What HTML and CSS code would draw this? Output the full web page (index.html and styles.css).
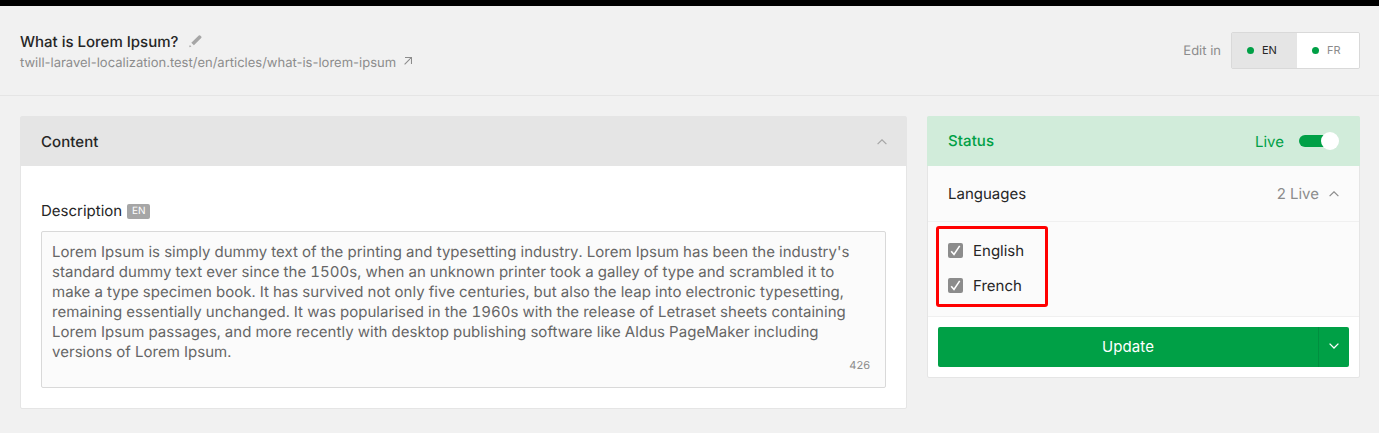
FILE: index.html
```html
<!DOCTYPE html>
<html lang="en">
<head>
<meta charset="utf-8">
<title>What is Lorem Ipsum?</title>
<link rel="stylesheet" href="styles.css">
</head>
<body>
<div class="topbar"></div>
<header class="header">
  <div class="heading">
    <h1 class="title"><span class="title-text">What is Lorem Ipsum?</span>
      <svg class="pencil" width="13" height="13" viewBox="0 0 13 13"><path d="M9.8 .5a1 1 0 0 1 1.4 0l1 1a1 1 0 0 1 0 1.4L4.9 10.2 2.3 7.8z"/><path d="M.8 10l1.6 1.6-2.2.6z"/></svg>
    </h1>
    <a class="permalink"><span class="permalink-text">twill-laravel-localization.test/en/articles/what-is-lorem-ipsum</span>
      <svg class="arrow" width="8" height="8" viewBox="0 0 8 8"><path d="M1 .5h6.5V7M7.3.7L.6 7.4"/></svg>
    </a>
  </div>
  <div class="switcher">
    <span class="switcher-label">Edit in</span>
    <div class="langs">
      <button class="lang lang-active"><i class="dot"></i><span>EN</span></button>
      <button class="lang"><i class="dot"></i><span>FR</span></button>
    </div>
  </div>
</header>
<main class="main">
  <section class="panel">
    <div class="panel-head"><h2 class="panel-title">Content</h2>
      <svg class="chevron chevron-light" width="10" height="6" viewBox="0 0 10 6"><path d="M.6 5.2L5 .8l4.4 4.4"/></svg>
    </div>
    <div class="panel-body">
      <label class="label"><span>Description</span><span class="tag">EN</span></label>
      <div class="field">
        <div class="field-text">Lorem Ipsum is simply dummy text of the printing and typesetting industry. Lorem Ipsum has been the industry's<br>standard dummy text ever since the 1500s, when an unknown printer took a galley of type and scrambled it to<br>make a type specimen book. It has survived not only five centuries, but also the leap into electronic typesetting,<br>remaining essentially unchanged. It was popularised in the 1960s with the release of Letraset sheets containing<br>Lorem Ipsum passages, and more recently with desktop publishing software like Aldus PageMaker including<br>versions of Lorem Ipsum.</div>
        <span class="count">426</span>
      </div>
    </div>
  </section>
  <aside class="publisher">
    <div class="status"><h2 class="status-title">Status</h2>
      <div class="status-live"><span class="live-text">Live</span><span class="toggle"><i class="knob"></i></span></div>
    </div>
    <div class="languages"><span>Languages</span>
      <span class="summary"><span>2 Live</span><svg class="chevron" width="10" height="6" viewBox="0 0 10 6"><path d="M.6 5.2L5 .8l4.4 4.4"/></svg></span>
    </div>
    <div class="choices">
      <div class="choice"><span class="check"><svg width="15" height="15" viewBox="0 0 15 15"><path d="M3.2 8.2l2.8 3.3 5.7-8.6"/></svg></span><span>English</span></div>
      <div class="choice"><span class="check"><svg width="15" height="15" viewBox="0 0 15 15"><path d="M3.2 8.2l2.8 3.3 5.7-8.6"/></svg></span><span>French</span></div>
      <div class="highlight"></div>
    </div>
    <div class="actions">
      <button class="update">Update</button>
      <button class="more"><svg class="chevron chevron-white" width="10" height="6" viewBox="0 0 10 6"><path d="M.6 .6L5 5 9.4 .6"/></svg></button>
    </div>
  </aside>
</main>
</body>
</html>
```

FILE: styles.css
```css
* { box-sizing: border-box; }
body { margin: 0; background: #f1f1f1; color: #262626; font: 400 15px/20px Inter, "Liberation Sans", sans-serif; text-rendering: geometricPrecision; overflow: hidden; }
button { font: inherit; border: 0; padding: 0; margin: 0; }
svg { display: block; fill: none; flex: none; }
.topbar { height: 6px; background: #000; }
.header { height: 90px; padding: 0 19px 0 20px; border-bottom: 1px solid #e5e5e5; display: flex; justify-content: space-between; }
.heading { padding-top: 26px; }
.title { margin: 0; font-size: 15px; font-weight: 500; line-height: 20px; display: flex; align-items: center; gap: 11px; }
.pencil { fill: #a6a6a6; margin-top: -1px; }
.permalink { display: flex; color: #8c8c8c; font-size: 13px; line-height: 20px; gap: 7px; margin-top: 1px; }
.permalink-text { width: 377px; white-space: nowrap; }
.arrow { stroke: #8c8c8c; stroke-width: 1.1; margin-top: 4px; }
.switcher { display: flex; align-items: center; height: 37px; margin-top: 26px; gap: 10px; }
.switcher-label { color: #8c8c8c; font-size: 13px; }
.langs { display: flex; width: 129px; height: 37px; border: 1px solid #d9d9d9; border-radius: 2px; overflow: hidden; }
.lang { display: flex; align-items: center; gap: 8px; padding: 0 0 1px 15px; width: 62px; background: #fff; color: #8c8c8c; font-size: 11px; }
.lang-active { width: 65px; background: #e5e5e5; color: #262626; }
.dot { width: 7px; height: 7px; border-radius: 50%; background: #00a046; }
.main { display: grid; grid-template-columns: 887px 433px; gap: 20px; padding: 20px; align-items: start; }
.panel { background: #fff; border: 1px solid #e5e5e5; border-radius: 2px; height: 293px; }
.panel-head { height: 49px; padding: 0 19px 0 20px; background: #e5e5e5; display: flex; align-items: center; justify-content: space-between; }
.panel-title, .status-title { margin: 0; font-size: 15px; font-weight: 500; letter-spacing: .08px; }
.chevron { stroke: #8c8c8c; stroke-width: 1.2; }
.chevron-light { stroke: #a6a6a6; }
.chevron-white { stroke: #fff; stroke-width: 1.3; }
.panel-body { padding: 35px 20px 20px; }
.label { display: flex; align-items: center; gap: 5px; height: 20px; }
.tag { width: 23px; height: 15px; text-align: center; border-radius: 2px; background: #a6a6a6; color: #fff; font-size: 10px; line-height: 15px; }
.field { display: flex; flex-direction: column; height: 157px; margin-top: 10px; padding: 10px; border: 1px solid #d9d9d9; border-radius: 2px; background: #fbfbfb; color: #666; }
.field-text { white-space: nowrap; font-variant-numeric: tabular-nums; letter-spacing: .04px; }
.count { align-self: flex-end; margin: -7px 5px 0 0; font-size: 11px; line-height: 20px; color: #8c8c8c; }
.publisher { background: #fff; border: 1px solid #e5e5e5; border-radius: 2px; height: 262px; }
.status { height: 50px; margin: -1px -1px 0; padding: 0 21px; display: flex; align-items: center; justify-content: space-between; background: #d1ecda; color: #00a046; border-radius: 2px 2px 0 0; }
.status-live { display: flex; align-items: center; gap: 15px; }
.live-text { padding-top: 2px; }
.toggle { display: flex; align-items: center; justify-content: flex-end; width: 40px; height: 12px; border-radius: 6px; background: linear-gradient(90deg, #00a046 32px, transparent 32px); }
.knob { width: 18px; height: 18px; border-radius: 50%; background: #fff; flex: none; }
.languages { height: 56px; padding: 0 20px; display: flex; align-items: center; justify-content: space-between; background: #fbfbfb; border-bottom: 1px solid #f0f0f0; }
.summary { display: flex; align-items: center; gap: 10px; color: #8c8c8c; }
.choices { position: relative; height: 95px; padding: 19px 20px; display: flex; flex-direction: column; gap: 15px; background: #fbfbfb; border-bottom: 1px solid #f0f0f0; }
.choice { display: flex; align-items: center; gap: 10px; }
.check { width: 15px; height: 15px; margin-bottom: 1px; border-radius: 2px; background: #8c8c8c; }
.check svg { stroke: #fff; stroke-width: 1.6; }
.highlight { position: absolute; left: 8px; top: 4px; width: 112px; height: 81px; border: 3px solid #f00; border-radius: 3px; }
.actions { display: flex; padding: 10px; }
.update { flex: 1; height: 40px; background: #00a046; color: #fff; letter-spacing: .1px; border-radius: 2px 0 0 2px; }
.more { display: flex; align-items: center; justify-content: center; width: 31px; height: 40px; padding-bottom: 2px; background: #00a046; border-left: 1px solid #008f3f; border-radius: 0 2px 2px 0; }
```
